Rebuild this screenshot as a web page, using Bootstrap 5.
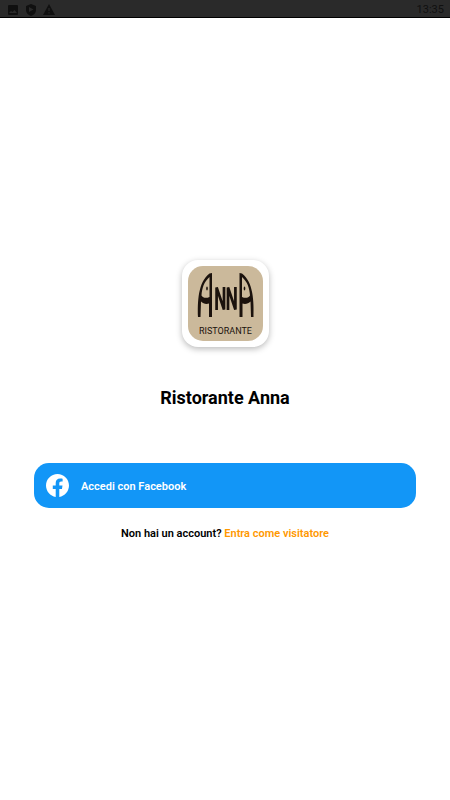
<!DOCTYPE html>
<html lang="it">
<head>
<meta charset="utf-8">
<meta name="viewport" content="width=device-width, initial-scale=1">
<title>Ristorante Anna</title>
<link href="https://cdn.jsdelivr.net/npm/bootstrap@5.3.0/dist/css/bootstrap.min.css" rel="stylesheet">
<style>
body { font-family: Roboto, "Liberation Sans", sans-serif; color: #000; }
.status-bar { height: 18px; background: #2a2a2a; border-bottom: 1px solid #000; color: #101010; font-size: 11px; line-height: 15px; padding: 2px 6px 0 7px; }
.status-icons { gap: 6px; }
.login { padding: 0 34px 16px; }
.logo-tile { padding: 6px; border-radius: 16px; box-shadow: 0 2px 6px rgba(0,0,0,.28); }
.brand { font-size: 18px; line-height: 24px; margin: 39px 0 53px; }
.btn-fb { --bs-btn-color: #fff; --bs-btn-bg: #1296f7; --bs-btn-hover-color: #fff; --bs-btn-hover-bg: #0d87e2; --bs-btn-active-bg: #0d87e2; --bs-btn-active-color: #fff; height: 45px; border: 0; border-radius: 15px; padding: 0 12px; gap: 12px; font-size: 11px; line-height: 16px; font-weight: 600; }
.btn-fb span { padding-top: 2px; }
.guest { font-size: 11px; line-height: 16px; font-weight: 600; margin: 18px 0 0; }
.guest a { color: #ff9800; }
.logo-word { font: 400 9px Roboto, sans-serif; }
</style>
<script defer src="https://cdn.jsdelivr.net/npm/bootstrap@5.3.0/dist/js/bootstrap.bundle.min.js"></script>
</head>
<body class="bg-white d-flex flex-column min-vh-100">
<header class="status-bar d-flex justify-content-between align-items-center">
  <div class="status-icons d-flex align-items-center" aria-hidden="true">
    <svg width="12" height="12" viewBox="0 0 12 12"><path fill="#101010" fill-rule="evenodd" d="M2 1h8a1 1 0 0 1 1 1v8a1 1 0 0 1-1 1H2a1 1 0 0 1-1-1V2a1 1 0 0 1 1-1zM2 9h8L7.500 6 5.500 8 4 7z"/></svg>
    <svg width="12" height="12" viewBox="0 0 12 12"><path fill="#101010" fill-rule="evenodd" d="M6 0l5 2v4c0 3-2 5-5 6-3-1-5-3-5-6V2zM4 3v5l4.500-2.500z"/></svg>
    <svg width="12" height="12" viewBox="0 0 12 12"><path fill="#101010" fill-rule="evenodd" d="M6 0l6 11H0zM5.400 4v3h1.200v-3zM5.400 8.200v1.200h1.200V8.200z"/></svg>
  </div>
  <time>13:35</time>
</header>
<main class="login flex-grow-1 d-flex flex-column justify-content-center align-items-center">
  <div class="logo-tile bg-white">
    <svg class="d-block" width="75" height="75" viewBox="0 0 75 75" role="img" aria-label="Anna Ristorante">
      <rect width="75" height="75" rx="15" fill="#cbb99b"/>
      <g id="fish">
        <path fill="#1b120d" fill-rule="evenodd" d="M24 7V51H21V37.500C18 38.500 15 37.500 13 35.500L12.500 51H10C9.500 36 10 16 21.500 7.500ZM21.500 11C16 16 14 22 13.500 29.500C15 32 18 32.500 21.500 31Z"/>
        <ellipse cx="19" cy="22.500" rx=".8" ry="2" fill="#1b120d"/>
      </g>
      <use href="#fish" transform="matrix(-1 0 0 1 75.500 0)"/>
      <path fill="none" stroke="#1b120d" stroke-width="2.700" stroke-linejoin="bevel" d="M28.600 44V21.500L36 43.500V21M40 44V21.500L47.400 43.500V21"/>
      <text class="logo-word" x="37.500" y="68" text-anchor="middle" fill="#1b120d">RISTORANTE</text>
    </svg>
  </div>
  <h1 class="brand fw-bold text-center">Ristorante Anna</h1>
  <button type="button" class="btn btn-fb w-100 d-flex align-items-center">
    <svg width="23" height="23" viewBox="0 0 24 24" fill="#fff" aria-hidden="true"><path d="M24 12.070C24 5.400 18.630 0 12 0S0 5.400 0 12.070C0 18.100 4.390 23.090 10.130 24v-8.440H7.080v-3.490h3.050V9.410c0-3.020 1.790-4.690 4.530-4.690 1.310 0 2.680.24 2.680.24v2.970h-1.510c-1.490 0-1.960.93-1.960 1.880v2.260h3.330l-.53 3.490h-2.800V24C19.610 23.090 24 18.100 24 12.070z"/></svg>
    <span>Accedi con Facebook</span>
  </button>
  <p class="guest text-center">Non hai un account? <a href="#" class="text-decoration-none">Entra come visitatore</a></p>
</main>
</body>
</html>
